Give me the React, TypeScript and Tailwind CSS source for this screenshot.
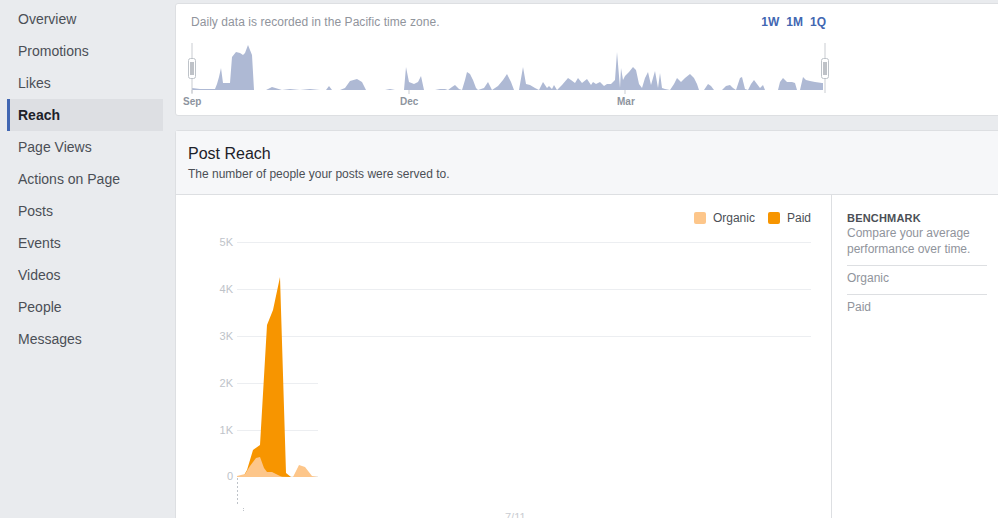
import React from "react";

const font = { fontFamily: '"Liberation Sans", Arial, Helvetica, sans-serif' };

const navItems = [
  "Overview",
  "Promotions",
  "Likes",
  "Reach",
  "Page Views",
  "Actions on Page",
  "Posts",
  "Events",
  "Videos",
  "People",
  "Messages",
];

const timelinePts =
  "192,90 192,88 200,89 215,89 217,84 219,77 221,68 223,83 230,83 232,57 236,52 240,53 243,55 245,53 248,45 252,55 254,90 266,90 272,87 282,90 290,89 300,90 310,89 320,90 326,90 329,86 332,90 340,90 345,88 350,81 357,79 362,82 366,90 385,90 390,89 395,90 404,90 406,67 409,82 414,84 418,82 421,76 424,90 435,90 440,89 445,89 448,90 452,87 455,85 459,89 462,90 465,80 467,72 470,74 473,80 476,88 478,90 484,88 488,82 492,90 498,86 503,80 507,74 511,82 514,90 519,90 523,67 526,84 530,85 535,88 539,90 543,82 547,88 549,86 552,89 554,85 557,90 562,85 568,78 571,80 575,83 578,78 582,83 587,79 591,85 593,82 596,84 600,82 604,86 607,84 611,84 615,80 617,52 619,76 620,88 621,68 623,80 625,76 629,72 633,67 636,70 639,84 642,88 645,78 648,72 651,85 655,71 658,88 660,73 662,88 665,89 670,90 674,84 677,78 681,82 685,78 690,74 694,78 697,84 699,90 704,90 708,84 711,86 714,90 722,90 726,86 730,85 733,88 736,90 740,78 742,77 745,89 748,90 751,84 754,80 757,84 760,88 763,85 765,90 778,90 780,82 783,78 787,82 792,82 795,83 797,90 800,90 803,77 806,80 810,81 815,82 822,83 823,83 823,90";

function Handle({ x }: { x: number }) {
  return (
    <g>
      <line x1={x} y1={43} x2={x} y2={93} stroke="#c9ccd1" strokeWidth={1} />
      <rect x={x - 3.5} y={58.5} width={7} height={20} rx={2} fill="#fff" stroke="#bec3c9" />
      <line x1={x - 1} y1={62} x2={x - 1} y2={75} stroke="#7f8590" strokeWidth={1} />
      <line x1={x + 1} y1={62} x2={x + 1} y2={75} stroke="#7f8590" strokeWidth={1} />
    </g>
  );
}

function Timeline() {
  return (
    <svg width={664} height={76} viewBox="176 36 664 76" className="block">
      <polygon points={timelinePts} fill="#aeb9d4" />
      <line x1={192} y1={90} x2={192} y2={94} stroke="#c9ccd1" />
      <line x1={409} y1={90} x2={409} y2={94} stroke="#c9ccd1" />
      <line x1={625} y1={90} x2={625} y2={94} stroke="#c9ccd1" />
      <Handle x={192} />
      <Handle x={825} />
      <g fontFamily='"Liberation Sans", Arial, sans-serif' fontSize={10} fontWeight={700} fill="#8d949e">
        <text x={183} y={105}>Sep</text>
        <text x={400} y={105}>Dec</text>
        <text x={617} y={105}>Mar</text>
      </g>
    </svg>
  );
}

const grid = [
  { y: 242, label: "5K", end: 811 },
  { y: 289, label: "4K", end: 811 },
  { y: 336, label: "3K", end: 811 },
  { y: 383, label: "2K", end: 318 },
  { y: 430, label: "1K", end: 318 },
  { y: 476, label: "0", end: 318 },
];

function ReachChart() {
  return (
    <svg width={655} height={300} viewBox="176 226 655 300" className="block">
      {grid.map((g) => (
        <g key={g.label}>
          <line x1={237} y1={g.y + 0.5} x2={g.end} y2={g.y + 0.5} stroke="#eceef1" />
          <text
            x={233}
            y={g.y + 4}
            textAnchor="end"
            fontFamily='"Liberation Sans", Arial, sans-serif'
            fontSize={11}
            fill="#bec3c9"
          >
            {g.label}
          </text>
        </g>
      ))}
      <polygon
        points="237,476 243,477 247,470 253,450 260,445 267,325 273,310 280,277 286,473 291,477 291,477"
        fill="#f79500"
      />
      <polygon
        points="237,476 245,474 250,466 256,458 260,457 264,468 267,472 272,472 278,475 282,477 293,477 299,465 305,467 312,476 318,477 237,477"
        fill="#fdc68a"
      />
      <line x1={237.5} y1={478} x2={237.5} y2={506} stroke="#bec3c9" strokeDasharray="2 2" />
      <line x1={243.5} y1={508} x2={243.5} y2={512} stroke="#bec3c9" strokeDasharray="1 1" />
      <text x={505} y={521} fontFamily='"Liberation Sans", Arial, sans-serif' fontSize={11} fill="#c9ccd1">
        7/11
      </text>
    </svg>
  );
}

export default function App() {
  return (
    <div className="flex w-[998px] h-[518px] overflow-hidden bg-[#e9ebee]" style={font}>
      <aside className="w-[175px] shrink-0 pt-[3px] pl-[7px]">
        {navItems.map((item) => {
          const active = item === "Reach";
          return (
            <div
              key={item}
              className={
                active
                  ? "w-[156px] h-[32px] flex items-center pl-[8px] border-l-[3px] border-[#4267b2] bg-[#dddfe3] text-[14px] font-bold text-[#1d2129]"
                  : "w-[156px] h-[32px] flex items-center pl-[11px] text-[14px] text-[#4b4f56]"
              }
            >
              {item}
            </div>
          );
        })}
      </aside>
      <main className="flex-1 pt-[3px] overflow-hidden">
        <section className="w-[850px] bg-white border border-[#dddfe2] rounded-[3px]">
          <div className="w-[655px] h-[32px] pt-[10px] pl-[15px] pr-[5px] flex items-start justify-between">
            <span className="text-[12px] leading-[16px] text-[#90949c] tracking-[0.05px]">
              Daily data is recorded in the Pacific time zone.
            </span>
            <span className="flex gap-[7px] text-[12px] leading-[16px] font-bold text-[#4267b2]">
              <span>1W</span>
              <span>1M</span>
              <span>1Q</span>
            </span>
          </div>
          <Timeline />
          <div className="h-[3px]" />
        </section>

        <section className="mt-[14px] w-[850px] bg-white border border-[#dddfe2] rounded-[3px]">
          <header className="bg-[#f6f7f9] border-b border-[#dddfe2] pt-[13px] pb-[12px] px-[12px]">
            <div className="text-[16px] leading-[20px] text-[#1d2129]">Post Reach</div>
            <div className="mt-[2px] text-[12px] leading-[16px] text-[#4b4f56]">
              The number of people your posts were served to.
            </div>
          </header>
          <div className="flex h-[340px]">
            <div className="w-[656px] shrink-0 border-r border-[#dddfe2]">
              <div className="flex justify-end items-center gap-[13px] pt-[15px] pr-[20px] h-[31px] text-[12px] leading-[16px] text-[#4b4f56]">
                <span className="flex items-center gap-[7px]">
                  <span className="w-[12px] h-[12px] rounded-[2px] bg-[#fdc68a]" />
                  Organic
                </span>
                <span className="flex items-center gap-[7px]">
                  <span className="w-[12px] h-[12px] rounded-[2px] bg-[#f79500]" />
                  Paid
                </span>
              </div>
              <ReachChart />
            </div>
            <div className="pl-[15px] pt-[16px]">
              <div className="w-[140px]">
                <div className="text-[11px] leading-[14px] font-bold text-[#4b4f56] tracking-[0.2px]">
                  BENCHMARK
                </div>
                <div className="text-[12px] leading-[16px] text-[#90949c]">
                  Compare your average performance over time.
                </div>
                <div className="mt-[8px] border-t border-[#dddfe2] pt-[4px] pb-[8px] text-[12px] leading-[16px] text-[#90949c]">
                  Organic
                </div>
                <div className="border-t border-[#dddfe2] pt-[4px] text-[12px] leading-[16px] text-[#90949c]">
                  Paid
                </div>
              </div>
            </div>
          </div>
        </section>
      </main>
    </div>
  );
}
